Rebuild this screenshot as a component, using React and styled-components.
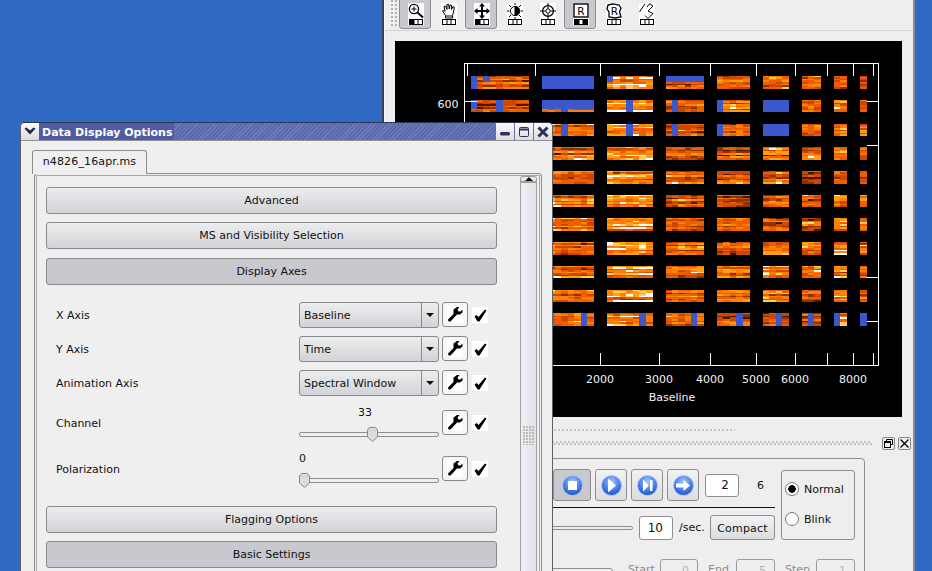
import React from "react";
import styled, { createGlobalStyle, css } from "styled-components";

const Global = createGlobalStyle`
  html, body { margin: 0; padding: 0; background: #316ac4; overflow: hidden; }
  body { font-family: "DejaVu Sans", sans-serif; font-size: 11px; color: #111; }
  * { box-sizing: border-box; }
`;

const Desktop = styled.div`
  position: relative;
  width: 932px;
  height: 571px;
  overflow: hidden;
  background: #316ac4;
`;

/* ---------- back window ---------- */
const BackWindow = styled.section`
  position: absolute;
  left: 382px;
  top: 0;
  width: 533px;
  height: 620px;
  background: #eeeeee;
  border-left: 2px solid #39415f;
  border-right: 2px solid #8a8d99;
  box-shadow: inset 1px 0 0 #fafafa;
`;

const Toolbar = styled.div`
  display: flex;
  align-items: flex-end;
  height: 31px;
  padding: 0 0 1px 7px;
  border-bottom: 1px solid #d4d4d4;
  overflow: hidden;
`;

const Grip = styled.div`
  width: 6px;
  height: 26px;
  margin: 0 2px 3px 0;
  align-self: flex-start;
  background-image: radial-gradient(circle at 1px 1px, #b0b0b0 1px, transparent 1.2px);
  background-size: 4px 4px;
`;

const ToolButton = styled.div`
  flex: none;
  width: 33px;
  height: 36px;
  padding: 10px 0 0 0;
  display: flex;
  justify-content: center;
  align-items: flex-start;
  position: relative;
  ${(p) =>
    p.$on &&
    css`
      &::before {
        content: "";
        position: absolute;
        left: 0;
        right: 1px;
        top: 0;
        bottom: 0;
        background: #c8c9ce;
        border: 1px solid #8e8e92;
        border-radius: 3px;
      }
    `}
  & > svg {
    position: relative;
  }
`;

const Canvas = styled.div`
  width: 507px;
  height: 376px;
  margin: 10px 0 0 11px;
  background: #000;
  & > svg {
    display: block;
  }
`;

const DockShort = styled.div`
  height: 3px;
  width: 337px;
  margin: 12px 0 0 14px;
  background-image: radial-gradient(circle at 1px 1px, #c6c6c6 1px, transparent 1.1px);
  background-size: 4px 3px;
`;

const DockRow = styled.div`
  display: flex;
  align-items: center;
  gap: 3px;
  height: 14px;
  margin: 4px 0 0 8px;
`;

const DockGrip = styled.div`
  width: 480px;
  height: 4px;
  margin-right: 7px;
  background-image: radial-gradient(circle at 1px 1px, #c2c2c2 1px, transparent 1.1px),
    radial-gradient(circle at 3px 3px, #c2c2c2 1px, transparent 1.1px);
  background-size: 4px 4px;
`;

const DockButton = styled.div`
  width: 13px;
  height: 13px;
  background: #efefef;
  border: 1px solid #888;
  border-radius: 2px;
  display: flex;
  align-items: center;
  justify-content: center;
`;

const GroupBox = styled.div`
  width: 470px;
  margin: 8px 0 0 11px;
  padding: 11px 9px 0 0;
  border: 1px solid #8e8e8e;
  border-radius: 4px;
  height: 140px;
`;

const UpperRow = styled.div`
  display: flex;
  justify-content: flex-end;
  gap: 6px;
`;

const TransportCol = styled.div`
  width: 390px;
  margin-top: -1px;
`;

const Transport = styled.div`
  display: flex;
  justify-content: flex-end;
  align-items: center;
  height: 32px;
`;

const OrbButton = styled.div`
  flex: none;
  width: ${(p) => (p.$wide ? "38px" : "32px")};
  height: 32px;
  margin-right: 4px;
  display: flex;
  align-items: center;
  justify-content: ${(p) => (p.$wide ? "flex-start" : "center")};
  padding-left: ${(p) => (p.$wide ? "8px" : "0")};
  border: 1px solid #8e8e8e;
  border-radius: 3px;
  background: ${(p) => (p.$on ? "#c8c9ce" : "linear-gradient(#f2f2f4, #dcdde1)")};
`;

const Orb = styled.span`
  width: 21px;
  height: 21px;
  border-radius: 50%;
  border: 1px solid #a8c2ee;
  background: radial-gradient(circle at 50% 30%, #a9c8f7 0%, #4f86ea 45%, #2356d2 80%, #2b5fd8 100%);
  display: flex;
  align-items: center;
  justify-content: center;
`;

const NumEntry = styled.div`
  flex: none;
  width: 34px;
  height: ${(p) => (p.$tall ? "24px" : "23px")};
  margin-left: ${(p) => (p.$tall ? "0" : "2px")};
  padding-right: 9px;
  background: #fff;
  border: 1px solid #8e8e8e;
  border-radius: 3px;
  text-align: right;
  line-height: ${(p) => (p.$tall ? "22px" : "21px")};
  font-size: 12px;
`;

const Total = styled.span`
  flex: none;
  width: 36px;
  padding-left: 18px;
  font-size: 11px;
`;

const BlackRule = styled.div`
  height: 1px;
  margin-top: 6px;
  background: #111;
`;

const RateRow = styled.div`
  display: flex;
  align-items: center;
  height: 25px;
  margin-top: 7px;
`;

const RateTrack = styled.div`
  flex: 1;
  height: 4px;
  margin-right: 6px;
  background: #eee;
  border: 1px solid #8e8e8e;
  border-radius: 2px;
`;

const Unit = styled.span`
  flex: none;
  margin: 0 5px 0 6px;
  font-size: 11px;
  width: 26px;
`;

const Compact = styled.div`
  flex: none;
  width: 65px;
  height: 25px;
  line-height: 25px;
  text-align: center;
  font-size: 11px;
  letter-spacing: 0.2px;
  border: 1px solid #8e8e8e;
  border-radius: 3px;
  background: linear-gradient(#f2f2f4, #dcdde1);
`;

const ModeBox = styled.div`
  flex: none;
  width: 74px;
  height: 70px;
  padding: 3px 0 0 3px;
  border: 1px solid #8e8e8e;
  border-radius: 3px;
`;

const RadioRow = styled.div`
  display: flex;
  align-items: center;
  gap: 5px;
  height: 30px;
  font-size: 11px;
`;

const RadioDot = styled.span`
  width: 14px;
  height: 14px;
  border-radius: 50%;
  border: 1px solid #777;
  background: ${(p) =>
    p.$on ? "radial-gradient(circle, #000 0 3.5px, #fff 4px)" : "#fff"};
`;

const RangeRow = styled.div`
  display: flex;
  margin-top: 19px;
  color: #8c8c8c;
  font-size: 11px;
`;

const RangeBox = styled.div`
  flex: 1;
  height: 20px;
  margin-top: 9px;
  border: 1px solid #8e8e8e;
  border-radius: 3px;
`;

const RangeLabel = styled.span`
  flex: none;
  width: ${(p) => p.$w}px;
  margin-left: ${(p) => p.$ml}px;
  line-height: 22px;
`;

const RangeField = styled.div`
  flex: none;
  width: ${(p) => p.$w}px;
  height: 24px;
  padding-right: 8px;
  line-height: 22px;
  text-align: right;
  color: #b4b4b4;
  border: 1px solid #9a9a9a;
  border-radius: 3px;
`;

/* ---------- front window ---------- */
const FrontWindow = styled.section`
  position: absolute;
  left: 20px;
  top: 122px;
  width: 533px;
  height: 480px;
  background: #efefef;
  border: 1px solid #5f5f66;
  border-top: 1px solid #30344f;
  border-radius: 5px 5px 0 0;
  overflow: hidden;
`;

const TitleBar = styled.header`
  display: flex;
  height: 18px;
  border-bottom: 1px solid #8f8f95;
  background: repeating-linear-gradient(135deg, #5b69ad 0 2px, #6f7cbd 2px 3px);
`;

const TitleMenu = styled.div`
  flex: none;
  width: 18px;
  background: linear-gradient(#fafafa, #dcdcde);
  display: flex;
  align-items: center;
  justify-content: center;
`;

const TitleText = styled.h1`
  margin: 0;
  padding: 1px 2px 0 3px;
  background: #4f5ca3;
  color: #fff;
  font: bold 11px/17px "DejaVu Sans", sans-serif;
  white-space: nowrap;
`;

const TitleSpacer = styled.div`
  flex: 1;
`;

const TitleButton = styled.div`
  flex: none;
  width: 18px;
  margin-left: 1px;
  background: linear-gradient(#fafafa, #dcdcde);
  display: flex;
  align-items: center;
  justify-content: center;
`;

const Tab = styled.div`
  width: 115px;
  height: 24px;
  margin: 9px 0 0 11px;
  padding-top: 4px;
  text-align: center;
  font-size: 11px;
  letter-spacing: 0.13px;
  background: #efefef;
  border: 1px solid #8e8e8e;
  border-bottom: none;
  border-radius: 3px 3px 0 0;
  position: relative;
  z-index: 1;
`;

const Pane = styled.div`
  display: flex;
  width: 508px;
  height: 430px;
  margin: -1px 0 0 13px;
  padding: 1px 1px 0 1px;
  border: 1px solid #8e8e8e;
  border-radius: 3px 3px 0 0;
  box-shadow: inset 0 0 0 1px #efefef, inset 0 0 0 2px #a6a6a6;
`;

const ScrollContent = styled.div`
  flex: 1;
  padding: 12px 23px 0 10px;
`;

const Section = styled.div`
  height: 27px;
  margin-bottom: ${(p) => p.$mb ?? 8}px;
  line-height: 25px;
  text-align: center;
  font-size: 11px;
  border: 1px solid #8a8a8a;
  border-radius: 3px;
  background: ${(p) => (p.$on ? "#c8c9ce" : "linear-gradient(#eceded, #d2d3d8)")};
`;

const Form = styled.div`
  margin: 17px 0 18px;
  display: grid;
  gap: 8px;
`;

const FormRow = styled.div`
  display: grid;
  grid-template-columns: 240px 140px 26px 17px;
  column-gap: 3px;
  padding-left: 10px;
  align-items: center;
  height: ${(p) => (p.$slider ? 38 : 26)}px;
`;

const FieldLabel = styled.span`
  font-size: 11px;
`;

const Combo = styled.div`
  display: flex;
  height: 26px;
  border: 1px solid #8a8a8a;
  border-radius: 3px;
  background: linear-gradient(#eceded, #d2d3d8);
  line-height: 25px;
  font-size: 11px;
`;

const ComboText = styled.span`
  flex: 1;
  padding-left: 4px;
`;

const ComboArrow = styled.span`
  flex: none;
  width: 17px;
  border-left: 1px solid #8a8a8a;
  display: flex;
  align-items: center;
  justify-content: center;
  &::after {
    content: "";
    border-left: 4px solid transparent;
    border-right: 4px solid transparent;
    border-top: 4px solid #111;
  }
`;

const SliderWrap = styled.div`
  height: 38px;
  position: relative;
`;

const SliderValue = styled.div`
  height: 22px;
  padding-top: 2px;
  font-size: 11px;
`;

const SliderTrack = styled.div`
  height: 5px;
  margin-top: 6px;
  background: #efefef;
  border: 1px solid #8e8e8e;
  border-radius: 2px;
`;

const SliderThumb = styled.svg`
  position: absolute;
  top: 23px;
`;

const WrenchButton = styled.div`
  width: 26px;
  height: 25px;
  margin-top: -2px;
  border: 1px solid #8a8a8a;
  border-radius: 3px;
  background: #f6f6f6;
  display: flex;
  align-items: center;
  justify-content: center;
`;

const CheckMark = styled.div`
  width: 16px;
  height: 16px;
  margin-left: 1px;
  background: #fff;
`;

const ScrollBar = styled.div`
  flex: none;
  width: 17px;
  margin: 1px 3px 0 0;
  display: flex;
  flex-direction: column;
`;

const ScrollUp = styled.div`
  height: 16px;
  border: 1px solid #a0a0a0;
  border-bottom: 2px solid #a0a0a0;
  border-radius: 3px 3px 0 0;
  background: linear-gradient(#f4f4f4, #dedee2);
  display: flex;
  align-items: center;
  justify-content: center;
  &::after {
    content: "";
    border-left: 4px solid transparent;
    border-right: 4px solid transparent;
    border-bottom: 4px solid #111;
  }
`;

const ScrollThumb = styled.div`
  height: 504px;
  flex: none;
  border-left: 1px solid #a0a0a0;
  border-right: 1px solid #a0a0a0;
  background: linear-gradient(90deg, #eef0f5, #e0e2e8);
  display: flex;
  align-items: center;
  justify-content: center;
  &::after {
    content: "";
    width: 11px;
    height: 19px;
    background-image: radial-gradient(circle at 1px 1px, #b8b8b8 1px, transparent 1.1px);
    background-size: 3px 3px;
  }
`;

/* ---------- drawings ---------- */
const Mode = ({ on }) => (
  <g>
    <rect x="1.5" y="16.5" width="13" height="5" fill="#fff" stroke="#000" />
    {on > 0 && <rect x="1.5" y="16.5" width="4.5" height="5" fill="#000" />}
    {on === 2 && <rect x="10" y="16.5" width="4.5" height="5" fill="#000" />}
    <path d="M6 16.5v5M10 16.5v5" stroke="#000" />
  </g>
);

const glyphs = {
  zoom: (
    <g fill="none" stroke="#000">
      <circle cx="6" cy="6" r="4.6" strokeWidth="1.3" />
      <path d="M6 3.5v5M3.5 6h5" />
      <path d="M9.500 9.500l5.500 5" strokeWidth="2" />
    </g>
  ),
  hand: (
    <path
      d="M4.500 15V12.500L1.500 8 2.500 7 4 8.500 3 3.500 4.500 3 6 6.500 6 1.500 7.600 1.300 8.300 6 9 2 10.600 2.200 10.400 6.500 12 3.500 13.400 4.200 12.500 9 11.600 12.500V15ZM4.500 13H11.600"
      fill="#fff"
      stroke="#000"
    />
  ),
  move: (
    <g fill="#000">
      <path d="M7 3h2v10H7zM3 7h10v2H3z" />
      <path d="M8 0l3 3.500H5zM8 16l-3-3.500h6zM0 8l3.500-3v6zM16 8l-3.500 3V5z" />
    </g>
  ),
  contrast: (
    <g stroke="#000" fill="none">
      <circle cx="8" cy="8" r="4.6" />
      <path d="M8 3.400a4.600 4.600 0 0 1 0 9.200z" fill="#000" />
      <path d="M8 0v2M8 14v2M0 8h2.500M13.500 8H16M2 2l2 2M14 2l-2 2M2 14l2-2M14 14l-2-2" />
    </g>
  ),
  target: (
    <g stroke="#000" fill="none">
      <circle cx="8" cy="8" r="5.400" strokeWidth="1.3" />
      <circle cx="8" cy="8" r="2.200" />
      <path d="M8 0v5.500M8 10.500V16M0 8h5.500M10.500 8H16" />
    </g>
  ),
  square: (
    <g>
      <rect x="1" y="1" width="14" height="13" fill="#fff" stroke="#000" strokeWidth="1.4" />
      <text x="8" y="12" textAnchor="middle" fontFamily="DejaVu Sans" fontSize="10.5">R</text>
    </g>
  ),
  blob: (
    <g>
      <path d="M2 2 7 .8 13 2 15 5 13.500 9 15 14 9 15 3 14 3 9 1 6Z" fill="#fff" stroke="#000" strokeWidth="1.3" />
      <text x="8.500" y="12" textAnchor="middle" fontFamily="DejaVu Sans" fontSize="10.5">R</text>
    </g>
  ),
  zigzag: (
    <path d="M.5 9 6 .8M8 4l2.500-3.200L14 3 9 8l5 2.500-5 5L6 12.500" fill="none" stroke="#000" />
  ),
};

const ToolIcon = ({ name, on }) => (
  <svg width="16" height="22" viewBox="0 0 16 22">
    <rect width="16" height="22" fill="#fff" />
    {glyphs[name]}
    <Mode on={on} />
  </svg>
);

const Wrench = () => (
  <svg width="16" height="17" viewBox="0 0 16 17">
    <rect width="16" height="17" fill="#fff" />
    <path d="M1 13.500 6.500 8 6.500 3.500 10 1 12.500 1 10.500 3.500 11.500 5.500 13.500 5.500 15.500 3.500 15.500 6.500 13 8.500 10 8.500 3.500 15.500 1.500 15.500Z" fill="#000" />
  </svg>
);

const Check = () => (
  <svg width="16" height="16" viewBox="0 0 16 16">
    <path d="M2.500 9.500 4.500 8 6.500 10 13 2.500 14.500 3.500 7.500 14.500 5.500 14.500Z" fill="#000" />
  </svg>
);

const Thumb = ({ x }) => (
  <SliderThumb width="11" height="15" viewBox="0 0 11 15" style={{ left: x }}>
    <path d="M.5 3 2.500.5h6l2 2.500v7L5.500 14.500.5 10Z" fill="#dcdde1" stroke="#8a8a8a" />
    <path d="M3 3v1M8 3v1" stroke="#aaa" />
  </SliderThumb>
);

const OrbGlyph = ({ kind }) => (
  <svg width="15" height="15" viewBox="0 0 15 15">
    {kind === "stop" && <rect x="3" y="3" width="9" height="9" fill="#fff" />}
    {kind === "play" && <path d="M4 .5 12 7.500 4 14.500Z" fill="#fff" />}
    {kind === "step" && <path d="M3 1.500 9 7.500 3 13.500ZM10 2h2.500v11H10Z" fill="#fff" />}
    {kind === "go" && <path d="M0 5.500H7.500V2L14 7.500 7.500 13V9.500H0Z" fill="#fff" />}
  </svg>
);

/* ---------- plot data ---------- */
const COLS = [
  [471, 58, 0.56], [542, 52, 0.58], [607, 46, 0.72], [666, 38, 0.54], [717, 33, 0.52],
  [763, 26, 0.56], [802, 19, 0.5], [834, 13, 0.6], [860, 7, 0.52],
];
const ROWS = [
  [76, 13], [100, 12], [124, 12], [147, 13], [171, 13], [195, 12], [218, 13], [242, 13], [266, 12], [290, 12], [313, 13],
];
const BLUE = "#3b57cb";
const STRIPES = 8;

const rnd = (a, b, c) => {
  const v = Math.sin(a * 127.1 + b * 311.7 + c * 74.7) * 43758.5453;
  return v - Math.floor(v);
};

const shade = (v) => {
  if (v < 0.14) return "#4a1600";
  if (v < 0.28) return "#8a3200";
  if (v < 0.46) return "#cc4800";
  if (v < 0.64) return "#ee5e00";
  if (v < 0.8) return "#ff8000";
  if (v < 0.91) return "#ffa010";
  if (v < 0.97) return "#ffd060";
  return "#ffffff";
};

const isBlue = (r, c, i, s) => {
  if (c === 1 && r === 0) return true;
  if (c === 5 && (r === 1 || r === 2)) return true;
  if (r === 0 && c === 0) return i === 0 || (i === 2 && s < 4);
  if (r === 0 && c === 2) return i === 0 && s < 4;
  if (r === 0 && c === 3) return s < 4;
  if (r === 1 && c === 0) return (i === 0 && s < 6) || i === 4;
  if (r === 1 && c === 1) return s < 6 || i === 3;
  if (r === 1 && c === 2) return i === 3;
  if (r === 1 && c === 3) return i === 1;
  if (r === 1 && c === 4) return i === 0;
  if (r === 2 && c === 1) return i === 3;
  if (r === 2 && c === 2) return i === 3;
  if (r === 2 && c === 3) return i === 1;
  if (r === 2 && c === 4) return i === 0;
  if (r === 10) return [null, 6, 5, 4, 3, 2, 1, 0, 0][c] === i;
  return false;
};

const cells = [];
ROWS.forEach(([y, h], r) => {
  COLS.forEach(([x, w, b], c) => {
    const n = Math.max(1, Math.round(w / 6.5));
    for (let i = 0; i < n; i++) {
      const x0 = Math.floor(x + (i * w) / n);
      const x1 = Math.floor(x + ((i + 1) * w) / n);
      for (let s = 0; s < STRIPES; s++) {
        const y0 = y + Math.floor((s * h) / STRIPES);
        const y1 = y + Math.floor(((s + 1) * h) / STRIPES);
        const v = b + (rnd(r, c, s) - 0.5) * 0.62 + (rnd(r + 9, c * 3 + i, s + 5) - 0.5) * 0.36 + (rnd(r, c + i * 7, 2) - 0.5) * 0.16;
        cells.push({
          k: `${r}-${c}-${i}-${s}`,
          x: x0,
          y: y0,
          w: x1 - x0,
          h: y1 - y0,
          fill: isBlue(r, c, i, s) ? BLUE : shade(v),
        });
      }
    }
  });
});

const TICKS = [467, 535, 600, 659, 710, 756, 795, 827, 853, 873];
const LABELS = [[600, "2000"], [659, "3000"], [710, "4000"], [756, "5000"], [795, "6000"], [853, "8000"]];

const Plot = () => (
  <svg width="507" height="376" viewBox="395 41 507 376" shapeRendering="crispEdges">
    {cells.map((c) => (
      <rect key={c.k} x={c.x} y={c.y} width={c.w} height={c.h} fill={c.fill} />
    ))}
    <g stroke="#fff" fill="none">
      <rect x="464.5" y="63.5" width="414" height="301.5" />
      {TICKS.map((x) => (
        <path key={x} d={`M${x + 0.5} 64V76M${x + 0.5} 353V365`} />
      ))}
      <path d="M465 101.5H477M867 101.5H879M867 145.5H879M867 277.5H879M867 321.5H879" />
    </g>
    <g fill="#f4f4f4" fontFamily="DejaVu Sans" fontSize="11" textAnchor="middle" shapeRendering="auto">
      {LABELS.map(([x, t]) => (
        <text key={t} x={x} y="383">{t}</text>
      ))}
      <text x="672" y="401">Baseline</text>
      <text x="448" y="108">600</text>
    </g>
  </svg>
);

const TOOLS = [
  ["zoom", 1, true], ["hand", 0, false], ["move", 1, true], ["contrast", 0, false],
  ["target", 0, false], ["square", 2, true], ["blob", 0, false], ["zigzag", 0, false],
];

const FormTools = () => (
  <>
    <WrenchButton><Wrench /></WrenchButton>
    <CheckMark><Check /></CheckMark>
  </>
);

const AXES = [["X Axis", "Baseline"], ["Y Axis", "Time"], ["Animation Axis", "Spectral Window"]];

export default function App() {
  return (
    <Desktop>
      <Global />
      <BackWindow>
        <Toolbar>
          <Grip />
          {TOOLS.map(([name, mode, on]) => (
            <ToolButton key={name} $on={on}>
              <ToolIcon name={name} on={mode} />
            </ToolButton>
          ))}
        </Toolbar>
        <Canvas><Plot /></Canvas>
        <DockShort />
        <DockRow>
          <DockGrip />
          <DockButton>
            <svg width="9" height="9" viewBox="0 0 9 9" fill="none" stroke="#000">
              <path d="M2.500 2.500V.5h6v5h-2" />
              <rect x=".5" y="2.500" width="6" height="6" />
              <path d="M.5 3.500h6" />
            </svg>
          </DockButton>
          <DockButton>
            <svg width="9" height="9" viewBox="0 0 9 9" stroke="#000" strokeWidth="1.3">
              <path d="M.5.5l8 8M8.500.5l-8 8" />
            </svg>
          </DockButton>
        </DockRow>
        <GroupBox>
          <UpperRow>
            <TransportCol>
              <Transport>
                <OrbButton $wide $on><Orb><OrbGlyph kind="stop" /></Orb></OrbButton>
                <OrbButton><Orb><OrbGlyph kind="play" /></Orb></OrbButton>
                <OrbButton><Orb><OrbGlyph kind="step" /></Orb></OrbButton>
                <OrbButton><Orb><OrbGlyph kind="go" /></Orb></OrbButton>
                <NumEntry>2</NumEntry>
                <Total>6</Total>
              </Transport>
              <BlackRule />
              <RateRow>
                <RateTrack />
                <NumEntry $tall>10</NumEntry>
                <Unit>/sec.</Unit>
                <Compact>Compact</Compact>
              </RateRow>
            </TransportCol>
            <ModeBox>
              <RadioRow><RadioDot $on />Normal</RadioRow>
              <RadioRow><RadioDot />Blink</RadioRow>
            </ModeBox>
          </UpperRow>
          <RangeRow>
            <RangeBox />
            <RangeLabel $w={32} $ml={15}>Start</RangeLabel>
            <RangeField $w={38}>0</RangeField>
            <RangeLabel $w={28} $ml={10}>End</RangeLabel>
            <RangeField $w={39}>5</RangeField>
            <RangeLabel $w={31} $ml={10}>Step</RangeLabel>
            <RangeField $w={39}>1</RangeField>
          </RangeRow>
        </GroupBox>
      </BackWindow>

      <FrontWindow>
        <TitleBar>
          <TitleMenu>
            <svg width="12" height="9" viewBox="0 0 12 9">
              <path d="M.5 1.500 2.500.5 6 3.500 9.500.5 11.500 1.500 6 7.500Z" fill="#23264f" />
            </svg>
          </TitleMenu>
          <TitleText>Data Display Options</TitleText>
          <TitleSpacer />
          <TitleButton>
            <svg width="12" height="12" viewBox="0 0 12 12">
              <rect x="1" y="6" width="10" height="3.500" rx="1.500" fill="#2b3160" />
            </svg>
          </TitleButton>
          <TitleButton>
            <svg width="12" height="12" viewBox="0 0 12 12" fill="none" stroke="#2b3160">
              <rect x="1.500" y="1.500" width="9" height="9" rx="1" />
              <path d="M1.500 3.500h9" strokeWidth="2" />
            </svg>
          </TitleButton>
          <TitleButton>
            <svg width="12" height="12" viewBox="0 0 12 12" stroke="#2b3160" strokeWidth="3">
              <path d="M1.500 1.500l9 9M10.500 1.500l-9 9" />
            </svg>
          </TitleButton>
        </TitleBar>
        <Tab>n4826_16apr.ms</Tab>
        <Pane>
          <ScrollContent>
            <Section>Advanced</Section>
            <Section $mb={9}>MS and Visibility Selection</Section>
            <Section $on $mb={0}>Display Axes</Section>
            <Form>
              {AXES.map(([label, value]) => (
                <FormRow key={label}>
                  <FieldLabel>{label}</FieldLabel>
                  <Combo>
                    <ComboText>{value}</ComboText>
                    <ComboArrow />
                  </Combo>
                  <FormTools />
                </FormRow>
              ))}
              <FormRow $slider>
                <FieldLabel>Channel</FieldLabel>
                <SliderWrap>
                  <SliderValue style={{ paddingLeft: 59 }}>33</SliderValue>
                  <SliderTrack />
                  <Thumb x={68} />
                </SliderWrap>
                <FormTools />
              </FormRow>
              <FormRow $slider>
                <FieldLabel>Polarization</FieldLabel>
                <SliderWrap>
                  <SliderValue>0</SliderValue>
                  <SliderTrack />
                  <Thumb x={0} />
                </SliderWrap>
                <FormTools />
              </FormRow>
            </Form>
            <Section>Flagging Options</Section>
            <Section $on>Basic Settings</Section>
          </ScrollContent>
          <ScrollBar>
            <ScrollUp />
            <ScrollThumb />
          </ScrollBar>
        </Pane>
      </FrontWindow>
    </Desktop>
  );
}
